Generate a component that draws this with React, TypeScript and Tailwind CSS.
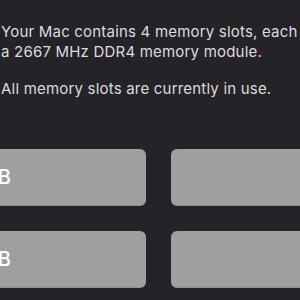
export default function App() {
  const slots = ['8 GB', '', '8 GB', ''];
  return (
    <div
      className="w-[300px] h-[300px] overflow-hidden bg-[#232328] text-[#dcdcdd]"
      style={{ fontFamily: 'Inter, "Liberation Sans", sans-serif' }}
    >
      <div className="pt-[22px] pl-[1px] text-[15px] leading-[20px] tracking-[0.2px] whitespace-nowrap">
        <p>Your Mac contains 4 memory slots, each</p>
        <p>a 2667 MHz DDR4 memory module.</p>
        <p className="mt-[17px]">All memory slots are currently in use.</p>
      </div>
      <div className="ml-[-54px] mt-[50px] grid grid-cols-[200px_200px] gap-x-[25px] gap-y-[25px]">
        {slots.map((s, i) => (
          <div
            key={i}
            className="h-[57px] rounded-[6px] bg-[#9e9fa1] border-b border-[#8a8b8d] flex items-center justify-end pr-[135px] text-white text-[20px] font-medium"
          >
            {s}
          </div>
        ))}
      </div>
    </div>
  );
}
